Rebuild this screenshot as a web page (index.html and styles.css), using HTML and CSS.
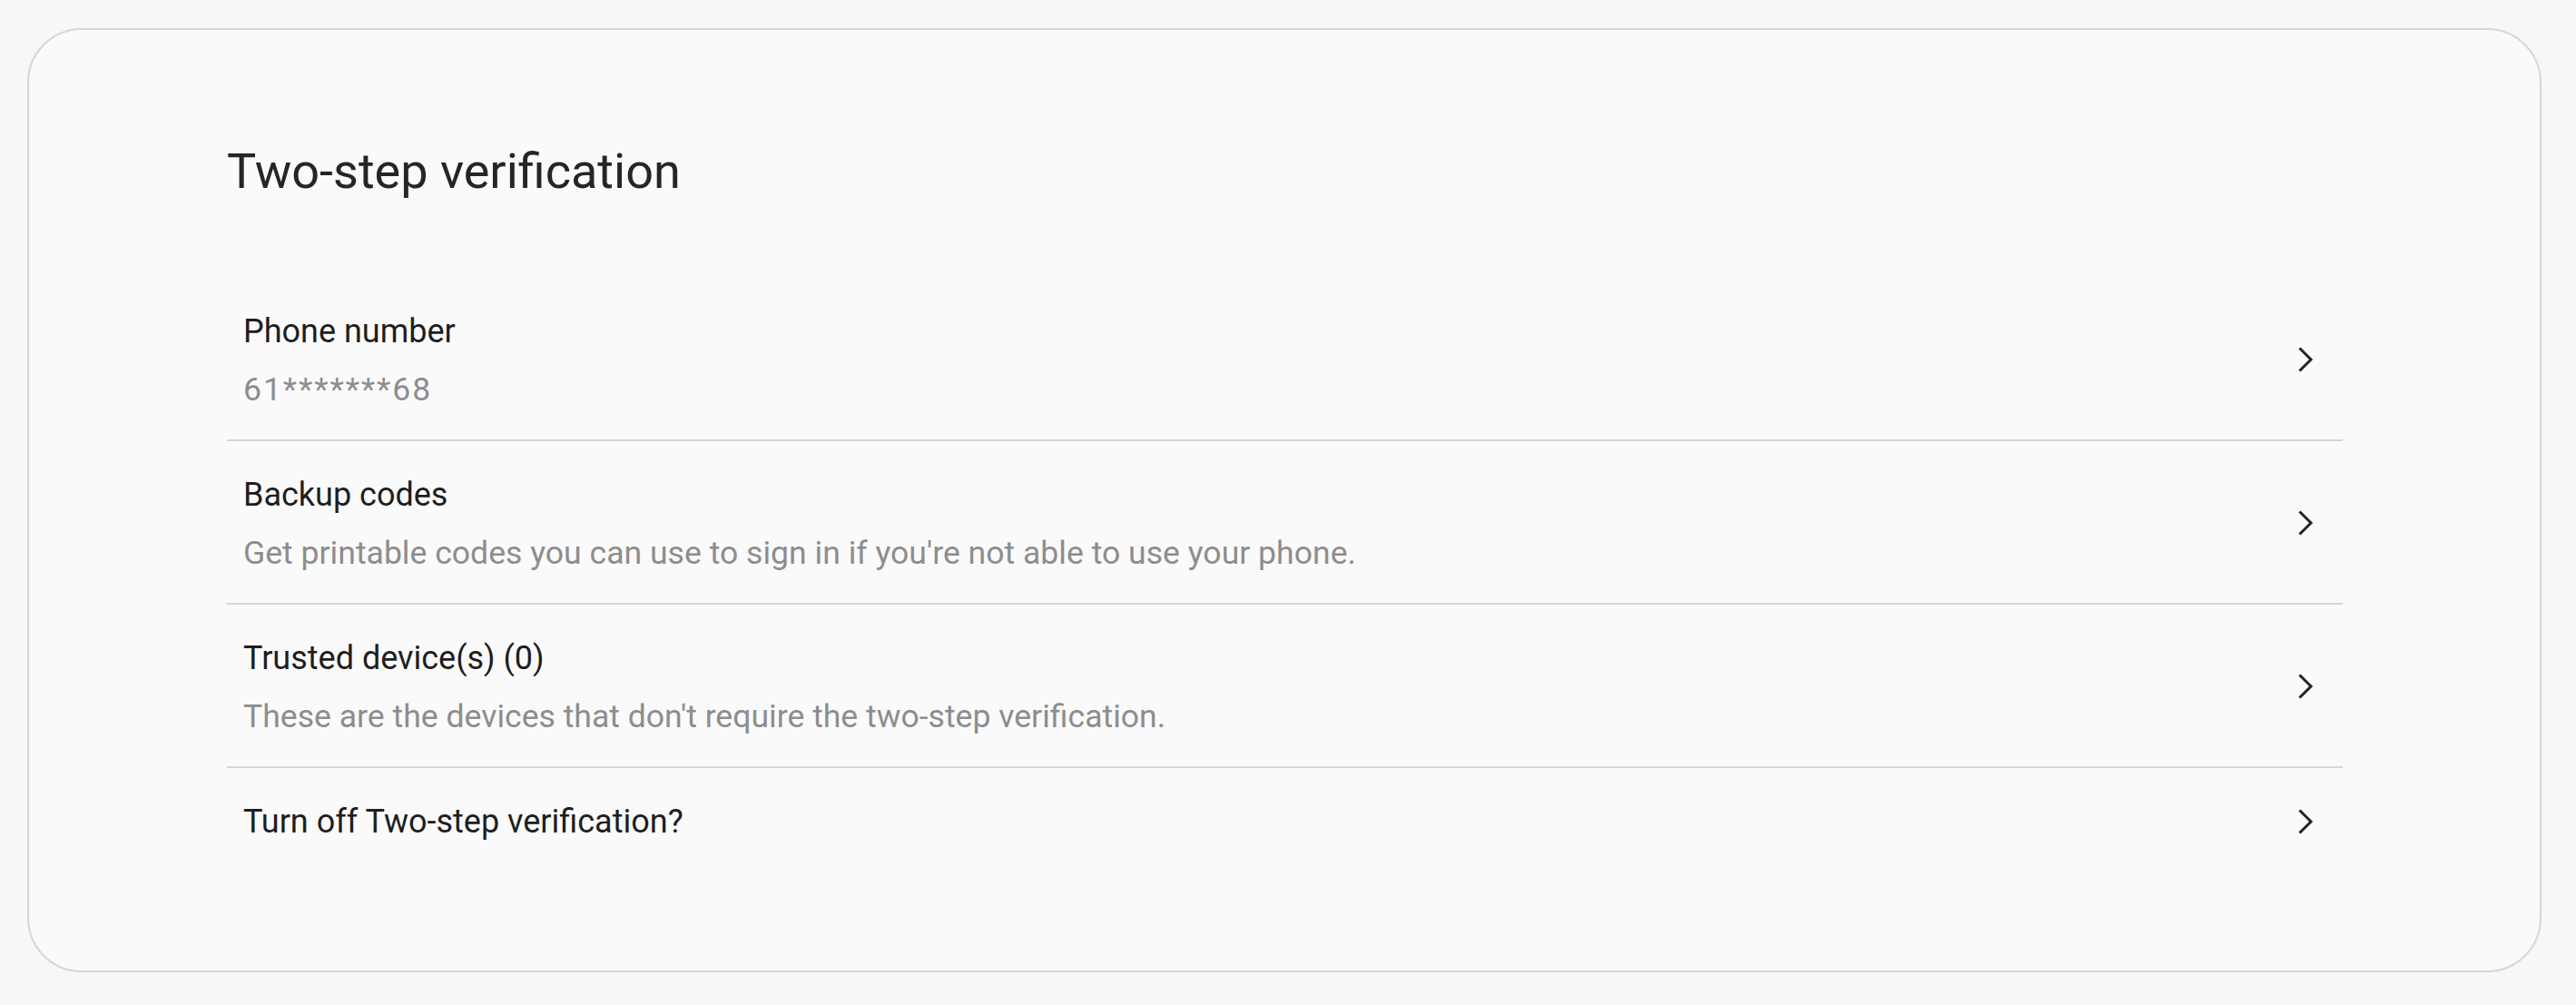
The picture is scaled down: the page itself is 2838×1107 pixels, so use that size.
FILE: index.html
```html
<!DOCTYPE html>
<html lang="en">
<head>
<meta charset="utf-8">
<title>Two-step verification</title>
<link rel="stylesheet" href="styles.css">
</head>
<body>
<main class="page">
  <section class="card">
    <h1 class="card-title">Two-step verification</h1>
    <ul class="menu">
      <li class="menu-item">
        <div class="menu-text">
          <div class="menu-label">Phone number</div>
          <div class="menu-desc menu-desc--masked">61*******68</div>
        </div>
        <svg class="chevron" viewBox="0 0 20 28" width="20" height="28" aria-hidden="true"><path d="M2.5 2.5 L14 14 L2.5 25.5"/></svg>
      </li>
      <li class="menu-item">
        <div class="menu-text">
          <div class="menu-label">Backup codes</div>
          <div class="menu-desc">Get printable codes you can use to sign in if you're not able to use your phone.</div>
        </div>
        <svg class="chevron" viewBox="0 0 20 28" width="20" height="28" aria-hidden="true"><path d="M2.5 2.5 L14 14 L2.5 25.5"/></svg>
      </li>
      <li class="menu-item">
        <div class="menu-text">
          <div class="menu-label">Trusted device(s) (0)</div>
          <div class="menu-desc">These are the devices that don't require the two-step verification.</div>
        </div>
        <svg class="chevron" viewBox="0 0 20 28" width="20" height="28" aria-hidden="true"><path d="M2.5 2.5 L14 14 L2.5 25.5"/></svg>
      </li>
      <li class="menu-item">
        <div class="menu-text">
          <div class="menu-label">Turn off Two-step verification?</div>
        </div>
        <svg class="chevron" viewBox="0 0 20 28" width="20" height="28" aria-hidden="true"><path d="M2.5 2.5 L14 14 L2.5 25.5"/></svg>
      </li>
    </ul>
  </section>
</main>
</body>
</html>
```

FILE: styles.css
```css
html, body {
  margin: 0;
  padding: 0;
  background: #f7f7f7;
  font-family: Roboto, "Liberation Sans", sans-serif;
}

.page {
  padding: 31px 38px 36px 30px;
}

.card {
  background: #fafafa;
  border: 2px solid #d6d6d6;
  border-radius: 60px;
  padding: 124px 217px 108px 218px;
}

.card-title {
  margin: 0 0 85px 0;
  font-size: 54px;
  line-height: 64px;
  font-weight: 400;
  color: #252525;
}

.menu {
  list-style: none;
  margin: 0;
  padding: 0;
}

.menu-item {
  display: flex;
  align-items: center;
  padding: 34px 29px 32px 18px;
  border-bottom: 2px solid #d6d6d6;
}

.menu-item:last-child {
  border-bottom: none;
  padding-bottom: 31px;
}

.menu-text {
  flex: 1;
  display: flex;
  flex-direction: column;
  gap: 16px;
}

.menu-label {
  font-size: 36px;
  line-height: 50px;
  color: #1e1e1e;
}

.menu-desc {
  font-size: 35.6px;
  line-height: 46px;
  color: #8d8d8d;
}

.menu-desc--masked {
  letter-spacing: 1.9px;
}

.chevron {
  flex: none;
  display: block;
}

.chevron path {
  fill: none;
  stroke: #222222;
  stroke-width: 3;
  stroke-linecap: square;
  stroke-linejoin: miter;
}
```
